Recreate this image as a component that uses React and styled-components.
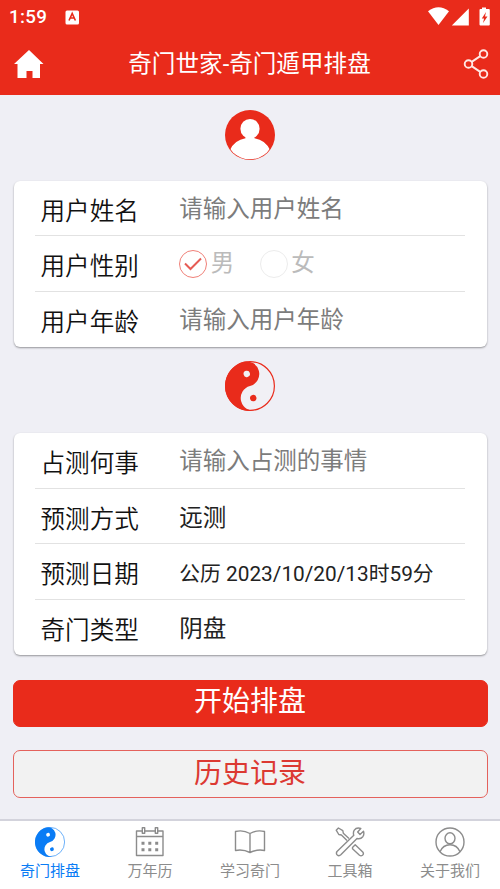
import React from 'react';
import styled, { createGlobalStyle } from 'styled-components';

const RED = '#e92b1b';

const Global = createGlobalStyle`
  * { box-sizing: border-box; }
  body {
    margin: 0;
    background: #efeff5;
    font-family: Roboto, "Noto Sans CJK SC", sans-serif;
  }
`;

const Screen = styled.div`
  width: 500px;
  height: 889px;
  display: flex;
  flex-direction: column;
  overflow: hidden;
  background: #efeff5;
`;

const Header = styled.header`
  height: 94.5px;
  flex: none;
  background: ${RED};
  color: #fff;
`;

const StatusBar = styled.div`
  height: 34px;
  padding: 0 9px;
  display: flex;
  align-items: center;
`;

const Clock = styled.span`
  width: 56px;
  font-size: 18.8px;
  font-weight: 500;
  line-height: 35px;
  letter-spacing: 0.3px;
`;

const StatusIcons = styled.svg`
  margin-left: auto;
  display: block;
`;

const TitleBar = styled.div`
  height: 60px;
  padding: 0 11px 0 14px;
  display: flex;
  align-items: center;
`;

const Title = styled.h1`
  flex: 1;
  margin: 0 0 0 -8px;
  text-align: center;
  font-size: 23.6px;
  font-weight: 400;
  line-height: 60px;
`;

const Emblem = styled.div`
  height: ${(p) => p.$height}px;
  padding-top: ${(p) => p.$top}px;
  flex: none;
  display: flex;
  justify-content: center;
`;

const Card = styled.section`
  flex: none;
  margin: 0 13.5px;
  padding: 0 21.5px;
  border-radius: 6px;
  background: #fff;
  box-shadow: 0 1px 2px rgba(0, 0, 0, 0.38);
`;

const Row = styled.div`
  height: 55.6px;
  display: flex;
  border-bottom: 1px solid #e2e2e2;
  &:last-child { border-bottom-color: transparent; }
`;

const Label = styled.label`
  width: 144.3px;
  height: 55px;
  padding-left: 5.5px;
  font-family: "Noto Sans CJK SC", sans-serif;
  font-size: 24.6px;
  font-weight: 350;
  line-height: 56px;
  color: #111;
  white-space: nowrap;
`;

const Value = styled.span`
  padding-top: ${(p) => p.$top ?? 2}px;
  font-size: ${(p) => p.$size ?? 23.5}px;
  line-height: 54px;
  color: ${(p) => (p.$hint ? '#7c7c7c' : '#222')};
  white-space: nowrap;
`;

const Radio = styled.span`
  width: 80.5px;
  display: flex;
  align-items: center;
  gap: 3.5px;
  font-size: 23.5px;
  line-height: 57px;
  color: #bbb;
`;

const RadioMark = styled.span`
  width: 28px;
  height: 28px;
  flex: none;
  margin-top: 1px;
  display: flex;
  align-items: center;
  justify-content: center;
  border: 1px solid ${(p) => (p.$checked ? '#f08078' : '#ececec')};
  border-radius: 50%;
`;

const Button = styled.button`
  flex: none;
  height: 47.5px;
  margin: ${(p) => p.$gap}px 12.5px 0;
  padding: 0 0 ${(p) => (p.$outline ? 0 : 4)}px;
  border: 1px solid ${(p) => (p.$outline ? '#e4625c' : RED)};
  border-radius: 7px;
  background: ${(p) => (p.$outline ? '#f2f2f2' : RED)};
  color: ${(p) => (p.$outline ? '#dc3932' : '#fff')};
  font-family: Roboto, "Noto Sans CJK SC", sans-serif;
  font-size: 28px;
  line-height: 38px;
`;

const TabBar = styled.nav`
  height: 70.5px;
  flex: none;
  margin-top: auto;
  display: flex;
  border-top: 2px solid #d3d3dc;
  background: #fff;
`;

const Tab = styled.a`
  flex: 1;
  padding-top: 6px;
  display: flex;
  flex-direction: column;
  align-items: center;
  font-size: 15px;
  line-height: 22px;
  color: ${(p) => (p.$active ? '#0a7cf5' : '#8c8c8c')};
  svg { display: block; margin-bottom: 3px; }
`;

function YinYang({ size, color, ground, ring }) {
  return (
    <svg width={size} height={size} viewBox="0 0 50 50">
      <circle cx="25" cy="25" r="24.4" fill={ground} stroke={color} strokeWidth={ring} />
      <g transform="rotate(-15 25 25)">
        <path d="M25 0a25 25 0 0 0 0 50a12.5 12.5 0 0 1 0-25a12.5 12.5 0 0 0 0-25z" fill={color} />
        <circle cx="25" cy="12.5" r="3.2" fill={ground} />
        <circle cx="25" cy="37.5" r="3.2" fill={color} />
      </g>
    </svg>
  );
}

const Person = () => (
  <svg width="50" height="50" viewBox="0 0 50 50">
    <defs>
      <clipPath id="portrait"><circle cx="25" cy="25" r="24.3" /></clipPath>
    </defs>
    <circle cx="25" cy="25" r="25" fill={RED} />
    <g clipPath="url(#portrait)" fill="#fff">
      <ellipse cx="25" cy="18.7" rx="9.6" ry="9.8" />
      <path d="M20.5 25h9v3.2Q40.5 30 45 40V50H5V40Q9.5 30 20.5 28.2z" />
    </g>
  </svg>
);

const Home = () => (
  <svg width="30" height="30" viewBox="0 0 30 30" fill="#fff">
    <path d="M15 1L29.5 15H26V29H18.5V22H12.5V29H3.5V15H0z" />
  </svg>
);

const Share = () => (
  <svg width="26" height="30" viewBox="0 0 26 30" fill="none" stroke="#ffe8e5" strokeWidth="1.9">
    <circle cx="5.5" cy="15" r="3.8" />
    <circle cx="20.5" cy="5" r="3.8" />
    <circle cx="20.5" cy="25" r="3.8" />
    <path d="M8.7 12.9L17.2 7.1M8.7 17.1L17.2 22.9" />
  </svg>
);

const line = { fill: 'none', stroke: 'currentColor', strokeWidth: 1.4, strokeLinejoin: 'round' };

const Calendar = () => (
  <svg width="30" height="30" viewBox="0 0 30 30" {...line}>
    <path d="M7 4H1.5V28.5H28V4H23M10 4H20M1.5 9.5H28" />
    <path d="M7.3 .8h2.4v5.4H7.3zM20.3 .8h2.4v5.4h-2.4z" />
    <path d="M6.5 16.3h3M13.3 16.3h3M20.2 16.3h3M6.5 22.7h3M13.3 22.7h3M20.2 22.7h3" strokeWidth="3" />
  </svg>
);

const Book = () => (
  <svg width="32" height="30" viewBox="0 0 32 30" {...line}>
    <path d="M16 6.5Q9 2.5 1.5 4.5V23.5Q9 22 16 25.5Q23 22 30.5 23.5V4.5Q23 2.5 16 6.5zM16 6.5V25.5" />
  </svg>
);

const Tools = () => (
  <svg width="30" height="30" viewBox="0 0 30 30" {...line}>
    <path d="M14 11.5L8.3 6.2L7.8 3.7L3.4 1L1.2 3.2L3.8 7.5L6.4 8L12 13.5" />
    <path d="M17.5 20.5L20.2 17.8L28 25.3Q29 27 27.5 28.3Q26 29.5 24.5 28.3L17.5 21.8z" />
    <path d="M25.8 1.5Q21.5 .1 19.3 3.2Q17.8 5.5 18.8 8.3L2 24.5Q.7 26.5 2.3 28Q4 29.4 5.8 27.8L22 11.5Q25.5 12.5 27.8 9.7Q29.5 7.3 28.5 4.2L25 7.5L22.7 5z" />
  </svg>
);

const Account = () => (
  <svg width="30" height="30" viewBox="0 0 30 30" {...line}>
    <circle cx="15" cy="15" r="14" />
    <ellipse cx="15" cy="11.3" rx="5" ry="5.5" />
    <path d="M5 24.7Q8 17.7 15 17.7Q22 17.7 25 24.7" />
  </svg>
);

const tabs = [
  ['奇门排盘', <YinYang size={30} color="#0a7cf5" ground="#fff" ring={1} />],
  ['万年历', <Calendar />],
  ['学习奇门', <Book />],
  ['工具箱', <Tools />],
  ['关于我们', <Account />],
];

export default function App() {
  return (
    <Screen>
      <Global />
      <Header>
        <StatusBar>
          <Clock>1:59</Clock>
          <svg width="14" height="15" viewBox="0 0 14 15">
            <rect x=".5" y=".5" width="13.5" height="14" rx="1.5" fill="#fff" />
            <path d="M4 10.5L7.2 3.5L10.4 10.5M5.2 8h4" fill="none" stroke={RED} strokeWidth="1.6" />
          </svg>
          <StatusIcons width="64" height="20" viewBox="0 0 64 20" fill="#fff">
            <path d="M1 4.3Q11.5-3.8 22 4.3L11.5 18z" />
            <path d="M41.8 1.5V18.5H24.8z" />
            <path d="M55 .5h4v1.5h2.8q1 0 1 1V17.5q0 1-1 1H53.5q-1 0-1-1V3q0-1 1-1H55z" />
            <path d="M59 5L54.8 11.4h2.3L56 16L60.5 9.6H58z" fill={RED} />
          </StatusIcons>
        </StatusBar>
        <TitleBar>
          <Home />
          <Title>奇门世家-奇门遁甲排盘</Title>
          <Share />
        </TitleBar>
      </Header>

      <Emblem $height={86} $top={15}><Person /></Emblem>

      <Card>
        <Row><Label>用户姓名</Label><Value $hint $top={1}>请输入用户姓名</Value></Row>
        <Row>
          <Label>用户性别</Label>
          <Radio>
            <RadioMark $checked>
              <svg width="18" height="14" viewBox="0 0 18 14" fill="none" stroke="#e65b54" strokeWidth="2">
                <path d="M1 6.5L6.5 12L17 1.5" />
              </svg>
            </RadioMark>
            男
          </Radio>
          <Radio><RadioMark />女</Radio>
        </Row>
        <Row><Label>用户年龄</Label><Value $hint $top={1}>请输入用户年龄</Value></Row>
      </Card>

      <Emblem $height={85.7} $top={13.7}>
        <YinYang size={50} color={RED} ground="#f1f0f5" ring={1.2} />
      </Emblem>

      <Card>
        <Row><Label>占测何事</Label><Value $hint $top={1}>请输入占测的事情</Value></Row>
        <Row><Label>预测方式</Label><Value>远测</Value></Row>
        <Row><Label>预测日期</Label><Value $top={3} $size={20.8}>公历 2023/10/20/13时59分</Value></Row>
        <Row><Label>奇门类型</Label><Value>阴盘</Value></Row>
      </Card>

      <Button $gap={24.5}>开始排盘</Button>
      <Button $gap={22.7} $outline>历史记录</Button>

      <TabBar>
        {tabs.map(([name, icon], i) => (
          <Tab key={name} $active={i === 0}>{icon}{name}</Tab>
        ))}
      </TabBar>
    </Screen>
  );
}
